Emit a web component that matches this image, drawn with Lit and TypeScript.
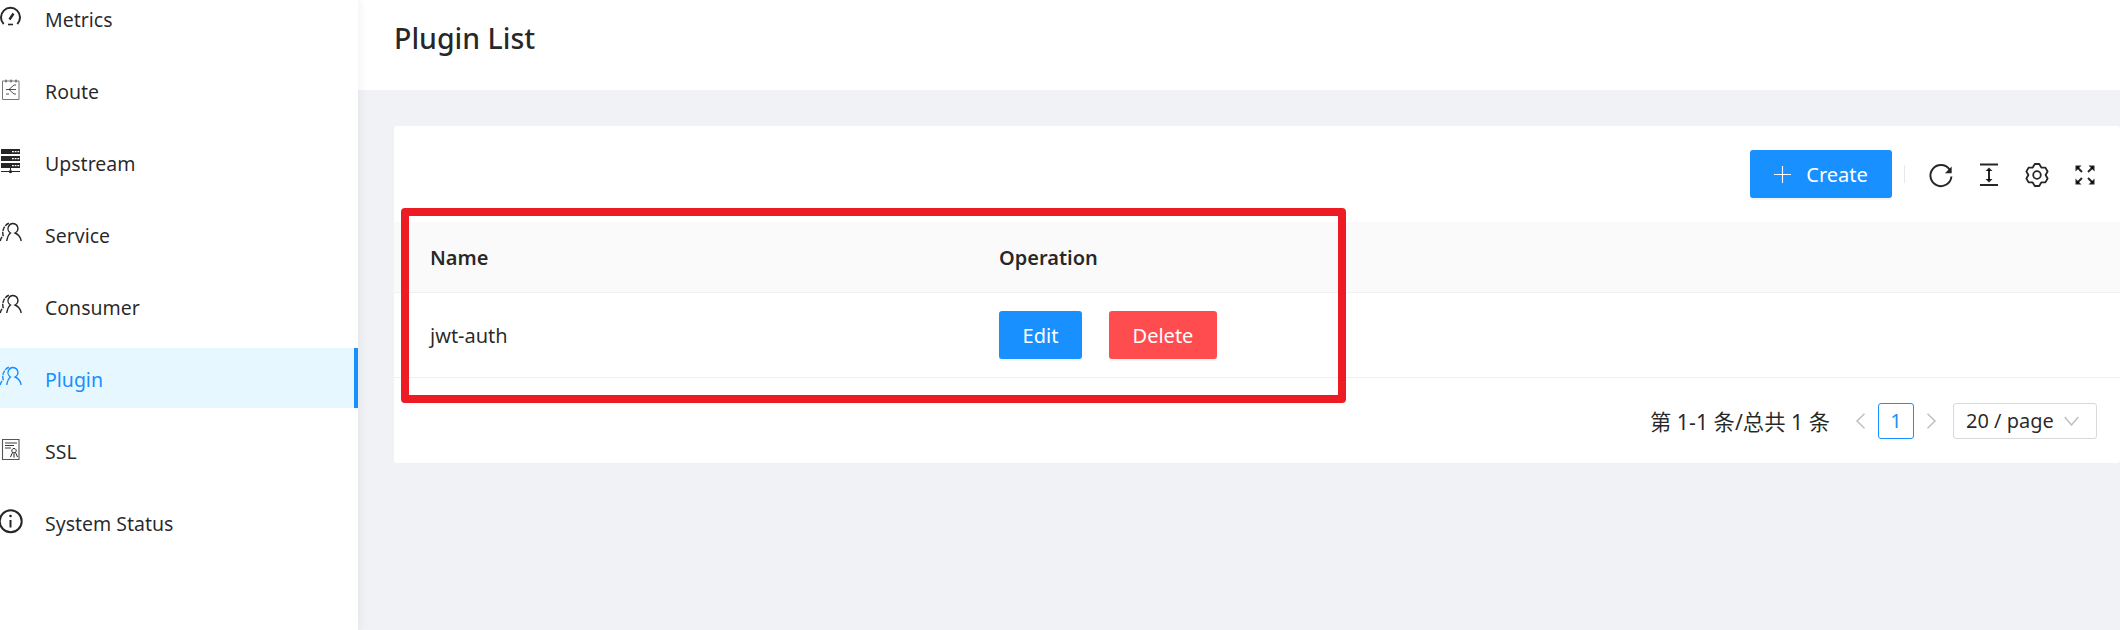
import { LitElement, css, html, svg } from 'lit'
import { customElement } from 'lit/decorators.js'

// six lobed cog, pointy side up, same shape as the toolbar settings icon
const gearPath = () => {
  const pts: string[] = []
  for (let i = 0; i < 6; i++) {
    const a = (i * Math.PI) / 3 - Math.PI / 2
    for (const [d, r] of [[-0.52, 8.6], [-0.2, 11.2], [0.2, 11.2]]) {
      pts.push(`${(12 + Math.cos(a + d) * r).toFixed(2)} ${(13 + Math.sin(a + d) * r).toFixed(2)}`)
    }
  }
  return `M${pts.join('L')}Z`
}

const PEOPLE = svg`<svg viewBox="0 0 24 24" fill="none" stroke="currentColor" stroke-width="1.400"><path d="M7.700 19C8.500 14.500 9.500 12.500 11.500 11 9 9.500 8.500 6.500 9.500 4.500 10.500 2.500 12 1.500 13.800 1.500c2 0 4 1.200 4.800 3.200.7 2.200-.3 5-2.600 6.300 3 1.200 5.400 3.700 6.200 8"/><path d="M1.200 19c.5-2.200 1.500-3.800 3-5.500 -.8-2.700-.5-5.200.6-7.300C5.800 4 7.500 2 10 1.200" stroke-dasharray="4.500 1"/></svg>`

const ICONS: Record<string, unknown> = {
  metrics: svg`<svg viewBox="0 0 24 24" fill="none" stroke="currentColor" stroke-width="2"><path d="M4.700 18A9.500 9.500 0 1 1 18.300 18"/><path d="M10.500 13.500 14.500 7.500" stroke-width="2.400"/><path d="M9 18.500h5" stroke-width="1.600"/></svg>`,
  route: svg`<svg viewBox="0 0 24 24" fill="none" stroke="currentColor" stroke-width="1"><path d="M3.500 3h16.500v18.500H3.500z" stroke="#777"/><path d="M7 1.500v3M12 1.500v3M17 1.500v3" stroke-width=".8"/><path d="M7 11.500h3l5-4.500h2M10 11.500h7M10 11.500l5 4.500h2M7 16h3" stroke-width=".8"/></svg>`,
  upstream: svg`<svg viewBox="0 0 24 24" fill="currentColor"><path fill-rule="evenodd" d="M2-1h19v5H2zM2 6h19v5H2zM2 13h19v5H2zM13 1h1.800v1.300H13zM15.700 1h1.800v1.300h-1.800zM18.400 1h1.800v1.300h-1.800zM13 8h1.800v1.300H13zM15.700 8h1.800v1.300h-1.800zM18.400 8h1.800v1.300h-1.800zM13 15h1.800v1.300H13zM15.700 15h1.800v1.300h-1.800zM18.400 15h1.800v1.300h-1.800z"/><path d="M2 21.100h8v1H2zM13 21.100h8v1h-8zM11 18h1v2h-1z"/><circle cx="11.500" cy="21.600" r="1.700"/></svg>`,
  people: PEOPLE,
  ssl: svg`<svg viewBox="0 0 24 24" fill="none" stroke="currentColor"><path d="M3.500 1.500h16.500v20H3.500z" stroke="#555" stroke-width="1.100"/><path d="M6 5h12M6 7.500h9M6 10h6" stroke-width=".9"/><path d="M15 10.500a2.200 2.200 0 1 0 .01 0M13.500 14.500l-2 4.500M16.500 14.500l2 4.500M15 15.500v4" stroke-width="1"/></svg>`,
  info: svg`<svg viewBox="0 0 24 24" fill="none" stroke="currentColor" stroke-width="2"><circle cx="11.700" cy="11.300" r="11"/><path d="M11.500 10v7.500" stroke-width="2"/><circle cx="11.500" cy="6" r="1.300" fill="currentColor" stroke="none"/></svg>`,
}

const MENU = [
  { icon: 'metrics', label: 'Metrics' },
  { icon: 'route', label: 'Route' },
  { icon: 'upstream', label: 'Upstream' },
  { icon: 'people', label: 'Service' },
  { icon: 'people', label: 'Consumer' },
  { icon: 'people', label: 'Plugin', active: true },
  { icon: 'ssl', label: 'SSL' },
  { icon: 'info', label: 'System Status' },
]

@customElement('app-root')
export class AppRoot extends LitElement {
  static styles = css`
    :host {
      display: block;
      width: 2120px;
      height: 630px;
      overflow: hidden;
      font-family: 'Noto Sans', 'Noto Sans CJK SC', sans-serif;
      font-size: 20px;
      color: rgba(0, 0, 0, 0.85);
      background: #f0f2f5;
    }

    .layout {
      display: flex;
      height: 630px;
    }

    .sider {
      position: relative;
      z-index: 1;
      width: 358px;
      flex: none;
      background: #fff;
      box-shadow: 2px 0 8px rgba(29, 35, 41, 0.06);
      overflow: hidden;
      font-size: 19.500px;
    }

    .menu {
      display: flex;
      flex-direction: column;
      gap: 12px;
      margin-top: -12px;
    }

    .item {
      display: flex;
      align-items: center;
      height: 60px;
      gap: 22px;
      box-sizing: border-box;
    }

    .item span {
      padding-top: 2px;
    }

    .item.active {
      background: #e6f7ff;
      color: #1890ff;
      border-right: 4px solid #1890ff;
    }

    .item svg {
      width: 24px;
      height: 24px;
      flex: none;
      margin-left: -1px;
      overflow: visible;
    }

    .main {
      flex: 1;
      min-width: 0;
    }

    .page-head {
      height: 90px;
      padding-left: 36px;
      background: #fff;
      display: flex;
      align-items: center;
    }

    h1 {
      margin: 0 0 14px;
      font-size: 28.500px;
      font-weight: 500;
    }

    .card {
      margin: 36px 0 0 36px;
      height: 337px;
      background: #fff;
      border-radius: 3px;
    }

    .toolbar {
      height: 96px;
      display: flex;
      align-items: center;
      justify-content: flex-end;
      padding-right: 23px;
    }

    button {
      font: inherit;
      border: 0;
      border-radius: 3px;
      height: 48px;
      color: #fff;
      background: #1890ff;
      box-shadow: 0 2px 0 rgba(0, 0, 0, 0.045);
    }

    .create {
      width: 142px;
      display: flex;
      align-items: center;
      justify-content: center;
      gap: 15px;
      padding: 0;
    }

    .create svg {
      width: 17px;
      height: 17px;
    }

    .divider {
      width: 1px;
      height: 18px;
      margin: 0 24px 0 12px;
      background: #e8e8e8;
    }

    .tools {
      display: flex;
      gap: 24px;
      color: rgba(0, 0, 0, 0.85);
    }

    .tools svg {
      width: 24px;
      height: 24px;
      display: block;
      overflow: visible;
    }

    .cols {
      display: grid;
      grid-template-columns: 569px 1fr;
      padding-left: 36px;
    }

    .thead {
      height: 70px;
      align-items: center;
      background: #fafafa;
      border-bottom: 1px solid #f0f0f0;
      font-weight: 600;
    }

    .row {
      height: 84px;
      align-items: center;
      border-bottom: 1px solid #f0f0f0;
    }

    .actions {
      display: flex;
      gap: 27px;
    }

    .edit {
      width: 83px;
      padding: 0;
    }

    .delete {
      width: 108px;
      padding: 0;
      background: #ff4d4f;
    }

    .pager {
      height: 85px;
      display: flex;
      align-items: center;
      justify-content: flex-end;
      padding-right: 23px;
    }

    .total {
      font-size: 21.300px;
      margin-right: 24px;
    }

    .chev {
      width: 12px;
      height: 16px;
      margin-right: 12px;
      color: #bfbfbf;
    }

    .chev.next {
      margin: 0 15px 0 12px;
    }

    .page {
      width: 36px;
      height: 36px;
      border: 1px solid #1890ff;
      border-radius: 3px;
      color: #1890ff;
      box-sizing: border-box;
      display: flex;
      align-items: center;
      justify-content: center;
    }

    .size {
      width: 144px;
      height: 36px;
      padding: 0 17px 0 12px;
      box-sizing: border-box;
      border: 1px solid #d9d9d9;
      border-radius: 3px;
      display: flex;
      align-items: center;
      justify-content: space-between;
    }

    .size svg {
      width: 15px;
      height: 10px;
      color: #bfbfbf;
    }

    .mark {
      position: absolute;
      left: 401px;
      top: 208px;
      width: 945px;
      height: 195px;
      box-sizing: border-box;
      border: 8px solid #ed1c24;
      border-radius: 4px;
    }
  `

  render() {
    return html`
      <div class="layout">
        <aside class="sider">
          <nav class="menu">
            ${MENU.map(m => html`
              <div class="item ${m.active ? 'active' : ''}">${ICONS[m.icon]}<span>${m.label}</span></div>
            `)}
          </nav>
        </aside>
        <main class="main">
          <header class="page-head"><h1>Plugin List</h1></header>
          <section class="card">
            <div class="toolbar">
              <button class="create">
                <svg viewBox="0 0 18 18" fill="none" stroke="currentColor" stroke-width="1.200"><path d="M9 0v18M0 9h18"/></svg>
                Create
              </button>
              <div class="divider"></div>
              <div class="tools">
                <svg viewBox="0 0 24 24" fill="none" stroke="currentColor" stroke-width="2"><path d="M20.500 7.500A10.500 10.500 0 1 0 22.400 14.500"/><path d="M22.700 4.500v6.800h-6.800z" fill="currentColor" stroke="none"/></svg>
                <svg viewBox="0 0 24 24" fill="none" stroke="currentColor" stroke-width="2"><path d="M3 2.500h18M3 23h18"/><path d="M12 8v10"/><path d="M8.500 9 12 5.500 15.500 9zM8.500 17l3.500 3.500 3.500-3.500z" fill="currentColor" stroke="none"/></svg>
                <svg viewBox="0 0 24 24" fill="none" stroke="currentColor" stroke-width="1.800" stroke-linejoin="round"><path d="${gearPath()}"/><circle cx="12" cy="13" r="3.800"/></svg>
                <svg viewBox="0 0 24 24" fill="none" stroke="currentColor" stroke-width="2"><path d="M4 5l5 5M20 5l-5 5M4 21l5-5M20 21l-5-5"/><path d="M2.500 3.500h6l-6 6zM21.500 3.500h-6l6 6zM2.500 22.500h6l-6-6zM21.500 22.500h-6l6-6z" fill="currentColor" stroke="none"/></svg>
              </div>
            </div>
            <div class="cols thead"><div>Name</div><div>Operation</div></div>
            <div class="cols row">
              <div>jwt-auth</div>
              <div class="actions"><button class="edit">Edit</button><button class="delete">Delete</button></div>
            </div>
            <div class="pager">
              <span class="total">第 1-1 条/总共 1 条</span>
              <svg class="chev" viewBox="0 0 12 16" fill="none" stroke="currentColor" stroke-width="1.500"><path d="M10.500.8 3 8l7.500 7.200"/></svg>
              <div class="page">1</div>
              <svg class="chev next" viewBox="0 0 12 16" fill="none" stroke="currentColor" stroke-width="1.500"><path d="M1.500.8 9 8l-7.500 7.200"/></svg>
              <div class="size">20 / page
                <svg viewBox="0 0 15 10" fill="none" stroke="currentColor" stroke-width="1.500"><path d="M.7 1l6.800 8 6.800-8"/></svg>
              </div>
            </div>
          </section>
        </main>
      </div>
      <div class="mark"></div>
    `
  }
}
